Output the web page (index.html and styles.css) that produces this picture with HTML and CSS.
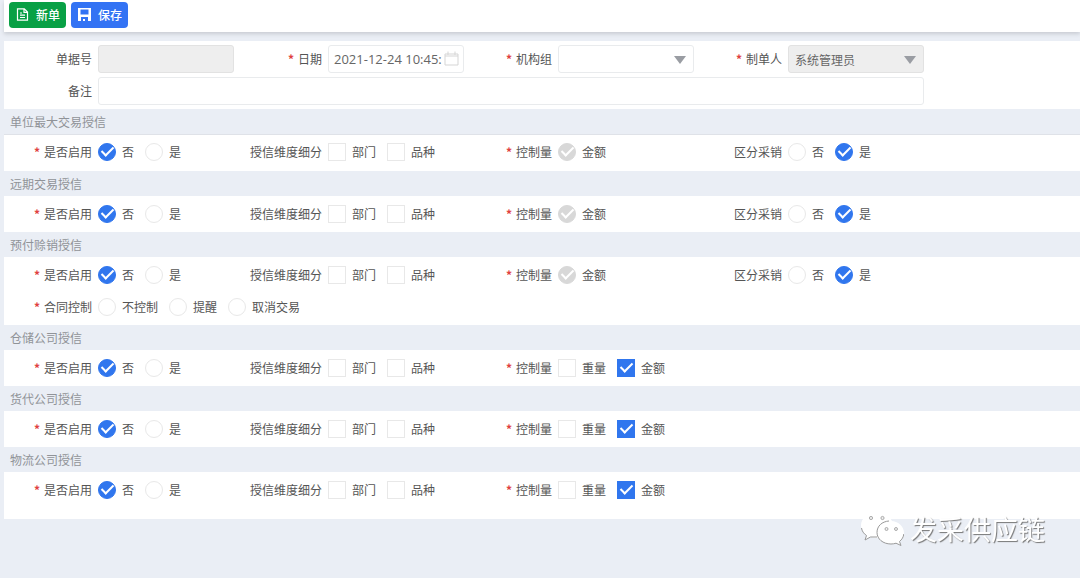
FILE: index.html
```html
<!DOCTYPE html>
<html lang="zh-CN">
<head>
<title>授信单</title>
<meta charset="utf-8">
<meta name="viewport" content="width=device-width, initial-scale=1">
<link rel="stylesheet" href="styles.css">
</head>
<body>
<div class="toolbar">
	<button type="button" class="btn btn-new">
		<svg viewBox="0 0 13 13" width="13" height="13" fill="none" stroke="#fff" stroke-width="1.2"><path d="M1.500 .8h6.800l3.200 3.200v8.200h-10zM8 1v3.300h3.200M4 5h2M4 7.200h5M4 9.500h5"/></svg>
		<span>新单</span>
	</button>
	<button type="button" class="btn btn-save">
		<svg viewBox="0 0 13 13" width="13" height="13"><path fill="#fff" fill-rule="evenodd" d="M0 0h13v13H0zM2.500 1.500v5h8v-5zM3 9v4h2v-2h2v2h3V9z"/></svg>
		<span>保存</span>
	</button>
</div>
<form>
	<div class="panel">
		<div class="field">
			<label class="name" for="billno">单据号</label>
			<input class="text" type="text" id="billno" disabled>
		</div>
		<div class="field">
			<label class="name required" for="date">日期</label>
			<div class="picker">
				<input class="text date" type="text" id="date" value="2021-12-24 10:45:">
				<svg viewBox="0 0 15 15" width="15" height="15" fill="none" stroke="#d5d5d5"><path d="M1 3h13v11H1zM1 5h13M4 .5V4M11 .5V4"/></svg>
			</div>
		</div>
		<div class="field">
			<label class="name required" for="org">机构组</label>
			<div class="picker select">
				<select class="text" id="org"><option></option></select>
			</div>
		</div>
		<div class="field">
			<label class="name required" for="maker">制单人</label>
			<div class="picker select">
				<select class="text" id="maker" disabled><option>系统管理员</option></select>
			</div>
		</div>
		<div class="field wide">
			<label class="name" for="remark">备注</label>
			<input class="text" type="text" id="remark">
		</div>
	</div>

	<h2>单位最大交易授信</h2>
	<div class="panel first">
		<div class="field" role="radiogroup" aria-labelledby="unit-on">
			<span class="name required" id="unit-on">是否启用</span>
			<label class="opt"><input type="radio" name="unit-on" checked>否</label>
			<label class="opt"><input type="radio" name="unit-on">是</label>
		</div>
		<div class="field" role="group" aria-labelledby="unit-dim">
			<span class="name" id="unit-dim">授信维度细分</span>
			<label class="opt"><input type="checkbox">部门</label>
			<label class="opt"><input type="checkbox">品种</label>
		</div>
		<div class="field" role="radiogroup" aria-labelledby="unit-qty">
			<span class="name required" id="unit-qty">控制量</span>
			<label class="opt"><input type="radio" name="unit-qty" checked disabled>金额</label>
		</div>
		<div class="field" role="radiogroup" aria-labelledby="unit-split">
			<span class="name" id="unit-split">区分采销</span>
			<label class="opt"><input type="radio" name="unit-split">否</label>
			<label class="opt"><input type="radio" name="unit-split" checked>是</label>
		</div>
	</div>

	<h2>远期交易授信</h2>
	<div class="panel">
		<div class="field" role="radiogroup" aria-labelledby="fwd-on">
			<span class="name required" id="fwd-on">是否启用</span>
			<label class="opt"><input type="radio" name="fwd-on" checked>否</label>
			<label class="opt"><input type="radio" name="fwd-on">是</label>
		</div>
		<div class="field" role="group" aria-labelledby="fwd-dim">
			<span class="name" id="fwd-dim">授信维度细分</span>
			<label class="opt"><input type="checkbox">部门</label>
			<label class="opt"><input type="checkbox">品种</label>
		</div>
		<div class="field" role="radiogroup" aria-labelledby="fwd-qty">
			<span class="name required" id="fwd-qty">控制量</span>
			<label class="opt"><input type="radio" name="fwd-qty" checked disabled>金额</label>
		</div>
		<div class="field" role="radiogroup" aria-labelledby="fwd-split">
			<span class="name" id="fwd-split">区分采销</span>
			<label class="opt"><input type="radio" name="fwd-split">否</label>
			<label class="opt"><input type="radio" name="fwd-split" checked>是</label>
		</div>
	</div>

	<h2>预付赊销授信</h2>
	<div class="panel">
		<div class="field" role="radiogroup" aria-labelledby="pre-on">
			<span class="name required" id="pre-on">是否启用</span>
			<label class="opt"><input type="radio" name="pre-on" checked>否</label>
			<label class="opt"><input type="radio" name="pre-on">是</label>
		</div>
		<div class="field" role="group" aria-labelledby="pre-dim">
			<span class="name" id="pre-dim">授信维度细分</span>
			<label class="opt"><input type="checkbox">部门</label>
			<label class="opt"><input type="checkbox">品种</label>
		</div>
		<div class="field" role="radiogroup" aria-labelledby="pre-qty">
			<span class="name required" id="pre-qty">控制量</span>
			<label class="opt"><input type="radio" name="pre-qty" checked disabled>金额</label>
		</div>
		<div class="field" role="radiogroup" aria-labelledby="pre-split">
			<span class="name" id="pre-split">区分采销</span>
			<label class="opt"><input type="radio" name="pre-split">否</label>
			<label class="opt"><input type="radio" name="pre-split" checked>是</label>
		</div>
		<div class="field wide" role="radiogroup" aria-labelledby="pre-contract">
			<span class="name required" id="pre-contract">合同控制</span>
			<label class="opt"><input type="radio" name="pre-contract">不控制</label>
			<label class="opt"><input type="radio" name="pre-contract">提醒</label>
			<label class="opt"><input type="radio" name="pre-contract">取消交易</label>
		</div>
	</div>

	<h2>仓储公司授信</h2>
	<div class="panel">
		<div class="field" role="radiogroup" aria-labelledby="store-on">
			<span class="name required" id="store-on">是否启用</span>
			<label class="opt"><input type="radio" name="store-on" checked>否</label>
			<label class="opt"><input type="radio" name="store-on">是</label>
		</div>
		<div class="field" role="group" aria-labelledby="store-dim">
			<span class="name" id="store-dim">授信维度细分</span>
			<label class="opt"><input type="checkbox">部门</label>
			<label class="opt"><input type="checkbox">品种</label>
		</div>
		<div class="field" role="group" aria-labelledby="store-qty">
			<span class="name required" id="store-qty">控制量</span>
			<label class="opt"><input type="checkbox">重量</label>
			<label class="opt"><input type="checkbox" checked>金额</label>
		</div>
	</div>

	<h2>货代公司授信</h2>
	<div class="panel">
		<div class="field" role="radiogroup" aria-labelledby="agent-on">
			<span class="name required" id="agent-on">是否启用</span>
			<label class="opt"><input type="radio" name="agent-on" checked>否</label>
			<label class="opt"><input type="radio" name="agent-on">是</label>
		</div>
		<div class="field" role="group" aria-labelledby="agent-dim">
			<span class="name" id="agent-dim">授信维度细分</span>
			<label class="opt"><input type="checkbox">部门</label>
			<label class="opt"><input type="checkbox">品种</label>
		</div>
		<div class="field" role="group" aria-labelledby="agent-qty">
			<span class="name required" id="agent-qty">控制量</span>
			<label class="opt"><input type="checkbox">重量</label>
			<label class="opt"><input type="checkbox" checked>金额</label>
		</div>
	</div>

	<h2>物流公司授信</h2>
	<div class="panel last">
		<div class="field" role="radiogroup" aria-labelledby="ship-on">
			<span class="name required" id="ship-on">是否启用</span>
			<label class="opt"><input type="radio" name="ship-on" checked>否</label>
			<label class="opt"><input type="radio" name="ship-on">是</label>
		</div>
		<div class="field" role="group" aria-labelledby="ship-dim">
			<span class="name" id="ship-dim">授信维度细分</span>
			<label class="opt"><input type="checkbox">部门</label>
			<label class="opt"><input type="checkbox">品种</label>
		</div>
		<div class="field" role="group" aria-labelledby="ship-qty">
			<span class="name required" id="ship-qty">控制量</span>
			<label class="opt"><input type="checkbox">重量</label>
			<label class="opt"><input type="checkbox" checked>金额</label>
		</div>
	</div>
</form>
<div class="watermark">
	<svg viewBox="0 0 44 38" width="44" height="38">
		<g fill="#fff">
			<path d="M17 2C8 2 1 8 1 15.500c0 4 2 7.500 5.500 10L5 30l5.500-3c2 .7 4 1 6.500 1 9 0 16-5.500 16-12.500S26 2 17 2z"/>
			<path d="M31 11c-8 0-14 5-14 11.500S23 34 31 34c2 0 3.500-.3 5-.8l5 2.300-1.500-4c3-2.200 4.500-5.200 4.500-8.500C44 16 38 11 31 11z"/>
		</g>
		<path d="M1.500 18c.5 3 2 5.500 5 7.500L5 30l5.500-3H17M29 11c-7 .5-12 5-12 11.500S23 34 31 34c2 0 3.500-.3 5-.8l5 2.300-1.500-4c2.500-2 4-4.500 4.300-7.500" fill="none" stroke="#999"/>
		<g fill="#eee" stroke="#999" stroke-width=".8"><circle cx="11" cy="8" r="1.600"/><circle cx="22.500" cy="8" r="1.600"/><circle cx="26.500" cy="19" r="1.500"/><circle cx="36" cy="19" r="1.500"/></g>
	</svg>
	<span>发采供应链</span>
</div>
</body>
</html>
```
FILE: styles.css
```css
body {
	margin: 0;
	font-family: "Noto Sans CJK SC", sans-serif;
	font-size: 12px;
	line-height: 18px;
	color: #555;
	background-color: #eaeef5;
}
input, select, button {
	font-family: inherit;
	font-size: 12px;
	margin: 0;
	box-sizing: border-box;
}
.toolbar {
	display: flex;
	gap: 5px;
	height: 32px;
	margin: 0 0 9px 4px;
	padding: 2px 5px;
	box-sizing: border-box;
	background-color: #fff;
	box-shadow: 0 2px 4px #c8cbd2;
}
.btn {
	display: flex;
	align-items: center;
	gap: 7px;
	height: 26px;
	padding: 0 6px 2px 7px;
	border: 0;
	border-radius: 4px;
	color: #fff;
	font-weight: 500;
}
.btn-new {
	background-color: #08a045;
}
.btn-save {
	background-color: #3373f4;
}
h2 {
	margin: 0;
	padding-left: 10px;
	font-size: 12px;
	font-weight: 400;
	line-height: 25px;
	color: #909398;
}
.panel {
	display: grid;
	grid-template-columns: repeat(auto-fill, 230px);
	grid-auto-rows: 32px;
	margin-left: 4px;
	padding: 2px 0;
	background-color: #fff;
}
.panel.first {
	padding-top: 1px;
	padding-bottom: 3px;
	border-top: 1px solid #dfe2e8;
}
.panel.last {
	padding-bottom: 13px;
}
.field {
	display: flex;
	align-items: center;
	white-space: nowrap;
}
.field.wide {
	grid-column: 1 / -1;
}
.name {
	flex: none;
	width: 88px;
	margin-right: 6px;
	text-align: right;
}
.required::before {
	content: "*";
	margin-right: 4px;
	font-weight: 700;
	color: #e04040;
}
.text {
	flex: 1;
	width: 100%;
	min-width: 0;
	height: 28px;
	padding: 0 6px;
	border: 1px solid #e9ebed;
	border-radius: 3px;
	color: #666;
	background-color: #fff;
	appearance: none;
}
.text:disabled {
	border-color: #e2e2e2;
	background-color: #eee;
	opacity: 1;
}
.date {
	padding: 0 0 0 5px;
	font-family: "Open Sans", sans-serif;
	font-size: 13px;
}
.picker {
	position: relative;
	display: flex;
	flex: 1;
}
.picker svg {
	position: absolute;
	top: 6px;
	right: 5px;
}
.select::after {
	content: "";
	position: absolute;
	top: 11px;
	right: 8px;
	border: 6px solid transparent;
	border-top: 8px solid #9a9da3;
	border-bottom: 0;
	pointer-events: none;
}
.opt {
	display: flex;
	align-items: center;
	gap: 6px;
	margin-right: 11px;
}
.opt input {
	display: grid;
	justify-content: center;
	width: 18px;
	height: 18px;
	border: 1px solid #e8e8e8;
	background-color: #fff;
	appearance: none;
}
.opt input[type=radio] {
	border-radius: 50%;
}
.opt input:checked {
	border-color: #3076ee;
	background-color: #3076ee;
}
.opt input:checked:disabled {
	border-color: #d8d8d8;
	background-color: #d8d8d8;
}
.opt input:checked::after {
	content: "";
	width: 5px;
	height: 10px;
	border: solid #fff;
	border-width: 0 2px 2px 0;
	transform: rotate(45deg);
}
.watermark {
	position: fixed;
	right: 35px;
	bottom: 30px;
	display: flex;
	align-items: center;
	gap: 6px;
	font-size: 27px;
	line-height: 38px;
	color: #fff;
	text-shadow: 1px 1px 1px #777;
}
```
